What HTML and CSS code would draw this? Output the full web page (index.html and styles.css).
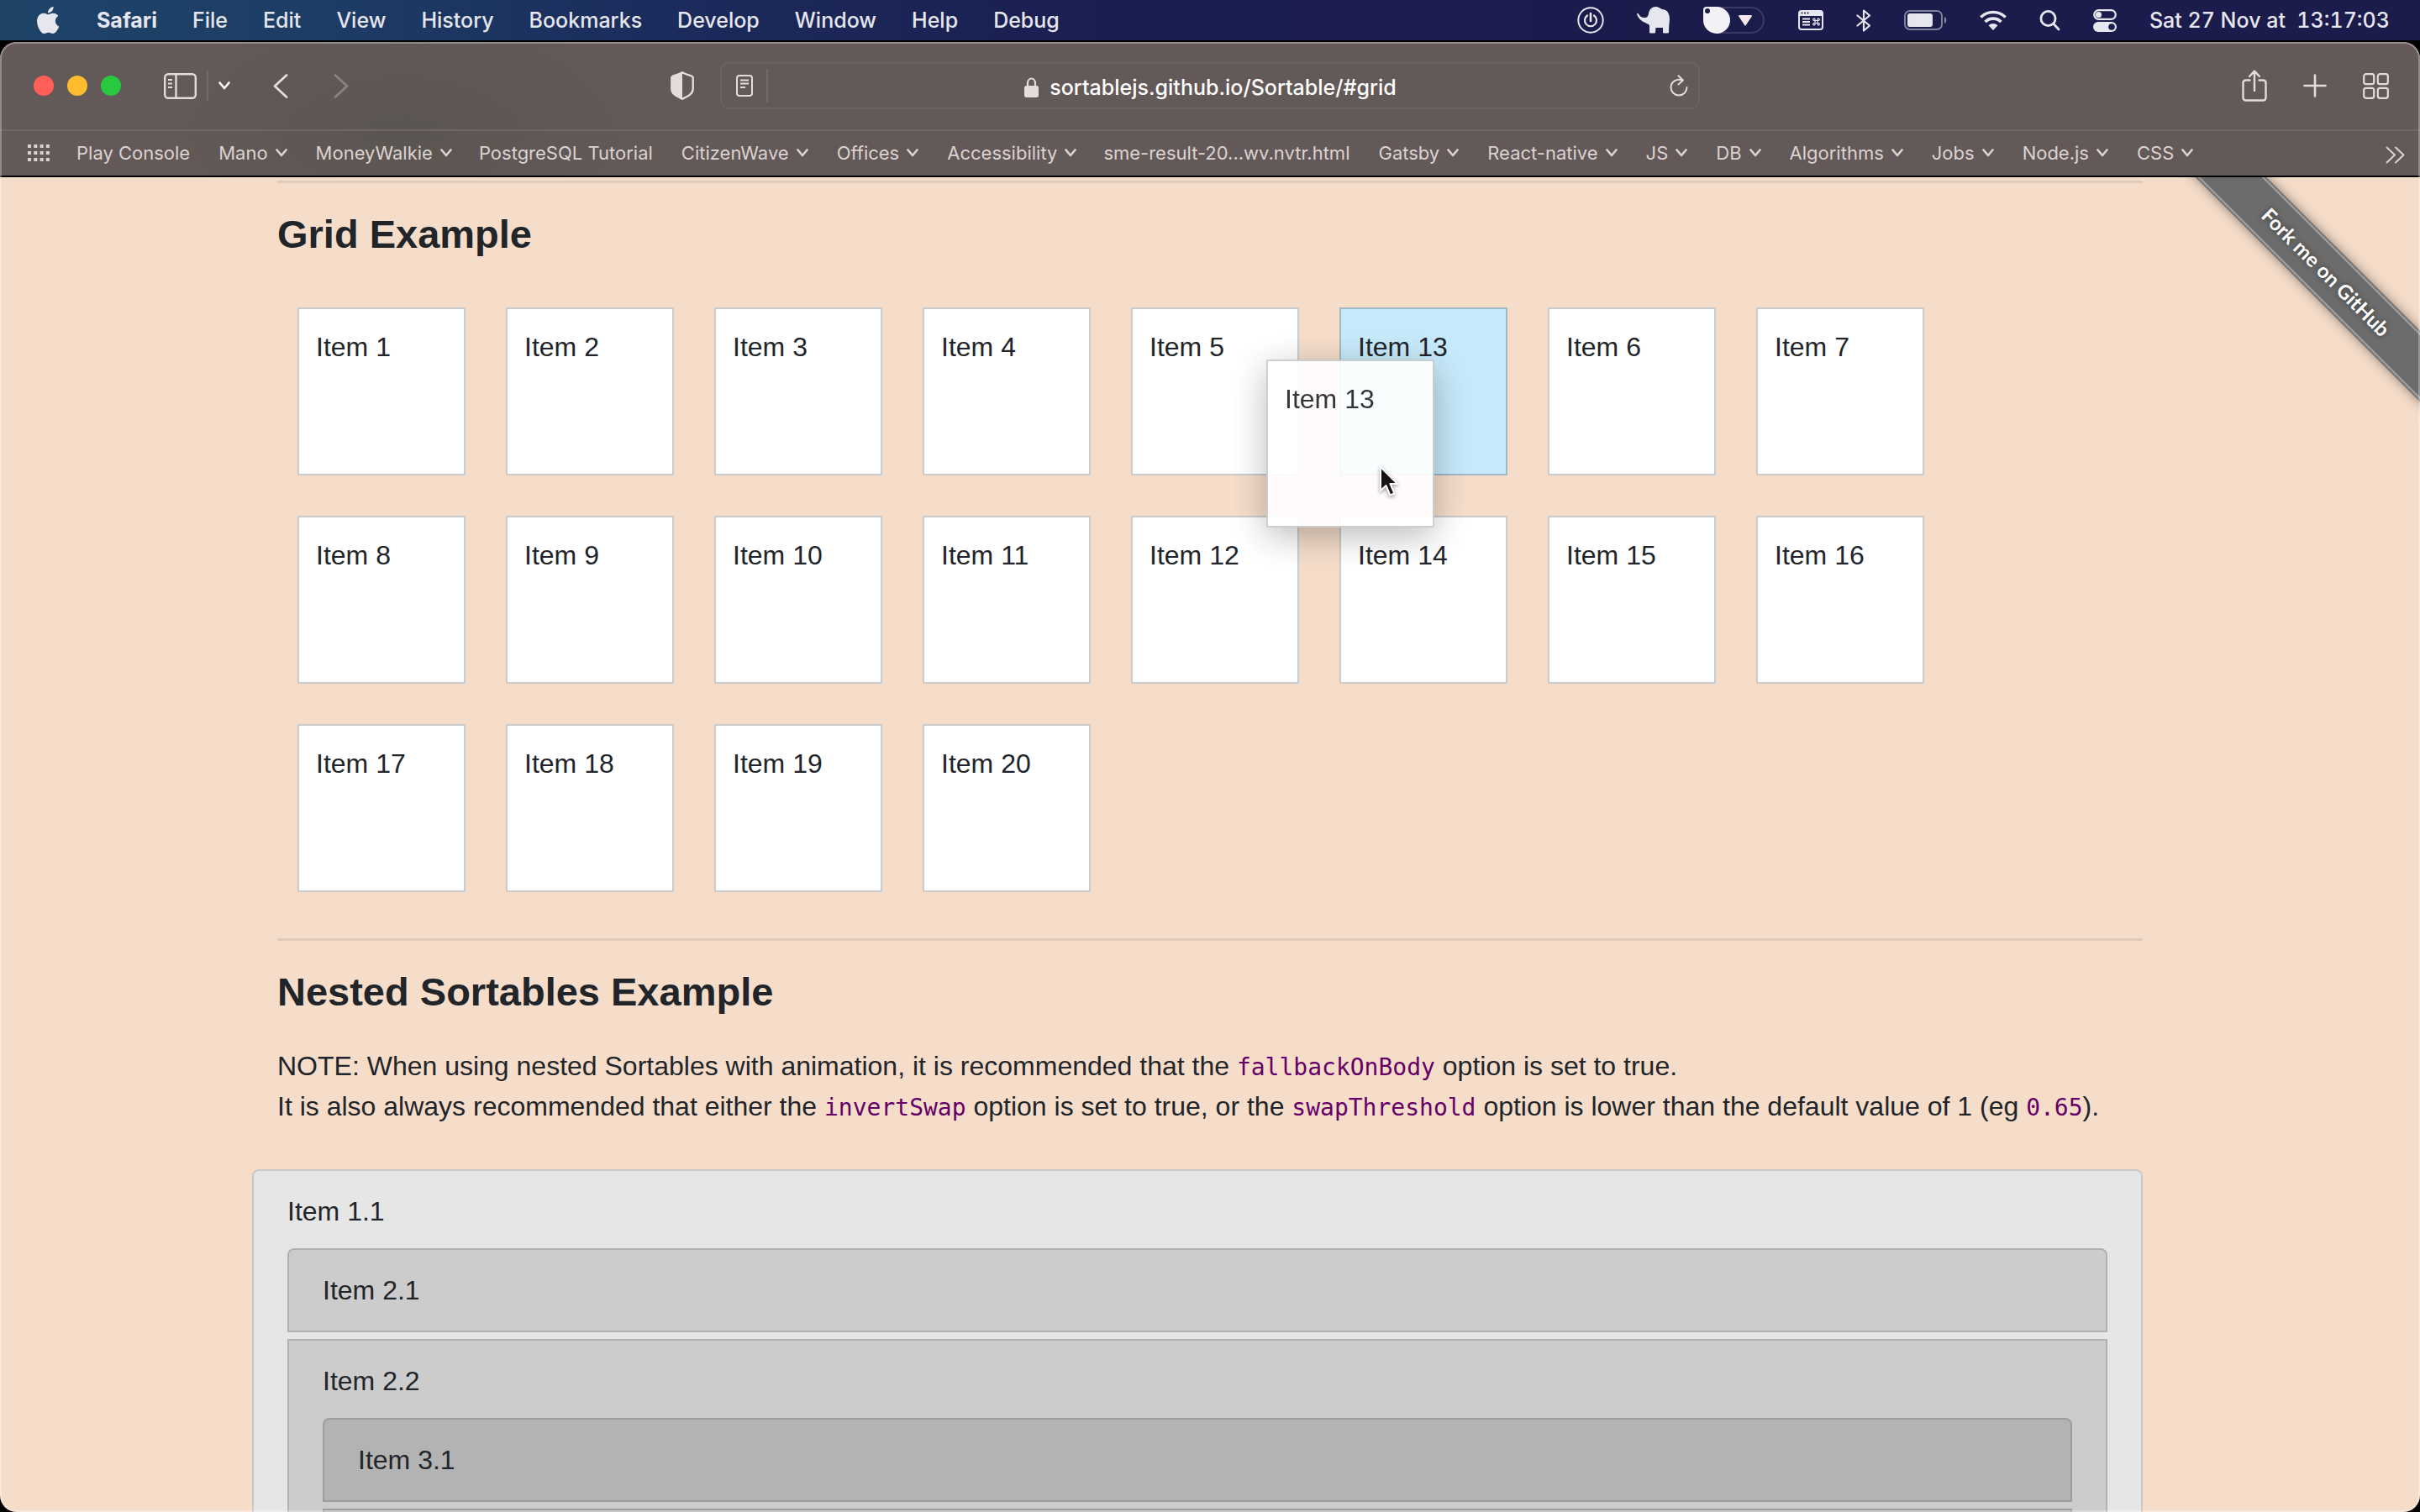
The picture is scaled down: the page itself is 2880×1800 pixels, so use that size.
FILE: index.html
```html
<!DOCTYPE html>
<html lang="en">
<head>
<meta charset="utf-8">
<title>SortableJS</title>
<link rel="stylesheet" href="styles.css">
</head>
<body>
<svg width="0" height="0" class="defs" aria-hidden="true">
  <symbol id="chev" viewBox="0 0 14 10"><path d="M1.500 1.500 7 8l5.500-6.500" fill="none" stroke="currentColor" stroke-width="2.600" stroke-linecap="round" stroke-linejoin="round"/></symbol>
</svg>

<header class="menubar">
  <nav class="menus" aria-label="Menu bar">
    <button class="menu apple" aria-label="Apple menu"><svg width="26" height="32" viewBox="2.200 0 19.400 24" preserveAspectRatio="none"><path fill="currentColor" d="M12.152 6.896c-.948 0-2.415-1.078-3.960-1.040-2.040.027-3.910 1.183-4.961 3.014-2.117 3.675-.546 9.103 1.519 12.090 1.013 1.454 2.208 3.090 3.792 3.039 1.520-.065 2.090-.987 3.935-.987 1.831 0 2.350.987 3.960.948 1.637-.026 2.676-1.480 3.676-2.948 1.156-1.688 1.636-3.325 1.662-3.415-.039-.013-3.182-1.221-3.220-4.857-.026-3.040 2.480-4.494 2.597-4.559-1.429-2.090-3.623-2.324-4.390-2.376-2-.156-3.675 1.090-4.610 1.090zM15.530 3.830c.843-1.012 1.400-2.427 1.245-3.830-1.207.052-2.662.805-3.532 1.818-.780.896-1.454 2.338-1.273 3.714 1.338.104 2.715-.688 3.559-1.701"/></svg></button>
    <button class="menu app">Safari</button>
    <button class="menu">File</button>
    <button class="menu">Edit</button>
    <button class="menu">View</button>
    <button class="menu">History</button>
    <button class="menu">Bookmarks</button>
    <button class="menu">Develop</button>
    <button class="menu">Window</button>
    <button class="menu">Help</button>
    <button class="menu">Debug</button>
  </nav>
  <div class="status">
    <svg width="32" height="32" viewBox="0 0 32 32" fill="none" stroke="currentColor" stroke-linecap="round"><circle cx="16" cy="16" r="14.700" stroke-width="2"/><path d="M16 8v9" stroke-width="2.600"/><path d="M12 10.500a7 7 0 1 0 8 0" stroke-width="2.200"/></svg>
    <svg width="40" height="32" viewBox="0 0 40 32"><path fill="currentColor" d="M0 8.500c.5-1 1.500-1 2 0 1.500 3 4 4.500 7 4.500 3.500 0 4.500-2 5-5 .8-5 4-8 8.500-8 3 0 5 1.500 6.500 2.500 1.500 1 3 .5 5 1.500 3.500 2 5 6 5 11l-.7 8-.3 7.500a1 1 0 0 1-1 1h-5a1 1 0 0 1-1-1V25h-8.500l-.5 5.500a1 1 0 0 1-1 1h-5a1 1 0 0 1-1-1V22.500C14 20.500 12.500 20.500 10 19 5 17 1 13 0 8.500z"/></svg>
    <svg width="74" height="32" viewBox="0 0 74 32"><rect x="1" y="1" width="71" height="30" rx="15" fill="none" stroke="#fff" stroke-opacity=".14" stroke-width="2"/><path fill="#f2f2f6" d="M4 0h12a16 16 0 1 1-16 16V4a4 4 0 0 1 4-4z"/><circle cx="5" cy="5" r="3" fill="#1b1b4c"/><path fill="#f6e8ea" d="M43 10h14a1 1 0 0 1 .8 1.500l-7 10.500a1 1 0 0 1-1.600 0l-7-10.500A1 1 0 0 1 43 10z"/></svg>
    <svg width="30" height="24" viewBox="0 0 30 24"><rect x="1" y="1" width="28" height="22" rx="3" fill="none" stroke="currentColor" stroke-width="2"/><path fill="currentColor" d="M1 1h28v6H1z"/><g fill="#1b1b4c"><circle cx="4.500" cy="3.500" r="1"/><circle cx="8" cy="3.500" r="1"/><circle cx="11.500" cy="3.500" r="1"/></g><path d="M5 10.500h9M5 14h9M5 17.500h9" stroke="currentColor" stroke-width="1.800"/><path d="M20 12.500h3v3h-3zM20 12.500h-1.500a1.200 1.200 0 1 1 1.500-1.500zM23 12.500h1.500A1.200 1.200 0 1 0 23 11zM20 15.500h-1.500A1.200 1.200 0 1 0 20 17zM23 15.500h1.500A1.200 1.200 0 1 1 23 17z" fill="none" stroke="currentColor" stroke-width="1.200"/></svg>
    <svg width="18" height="27" viewBox="0 0 18 27"><path d="M1.500 7.500 16 19.500l-7 6V1.500l7 6L1.500 19.500" fill="none" stroke="currentColor" stroke-width="2.200" stroke-linejoin="round" stroke-linecap="round"/></svg>
    <svg width="51" height="24" viewBox="0 0 51 24"><rect x="1" y="1" width="44" height="22" rx="6" fill="none" stroke="currentColor" stroke-opacity=".5" stroke-width="2"/><rect x="4" y="4" width="30" height="16" rx="3" fill="currentColor"/><path d="M48 8c3 1 3 7 0 8z" fill="currentColor" fill-opacity=".55"/></svg>
    <svg width="32" height="24" viewBox="0 0 32 24" fill="none" stroke="currentColor" stroke-width="3.600"><path d="M1.300 8.500a21 21 0 0 1 29.400 0"/><path d="M6.500 14a13.500 13.500 0 0 1 19 0"/><path fill="currentColor" stroke="none" d="M16 24l-5.500-5.700a8 8 0 0 1 11 0z"/></svg>
    <svg width="25" height="25" viewBox="0 0 25 25" fill="none" stroke="currentColor" stroke-width="2.800" stroke-linecap="round"><circle cx="10.500" cy="10" r="8.600"/><path d="M17 16.500l6 6.500"/></svg>
    <svg width="28" height="27" viewBox="0 0 28 27"><rect x="1.200" y="1.200" width="25.600" height="10.600" rx="5.300" fill="none" stroke="currentColor" stroke-width="2.200"/><circle cx="6.500" cy="6.500" r="3.600" fill="currentColor"/><rect y="15" width="28" height="12" rx="6" fill="currentColor"/><circle cx="22" cy="21" r="3.800" fill="#1b1b4c"/></svg>
    <time class="clock">Sat 27 Nov at&nbsp; 13:17:03</time>
  </div>
</header>

<div class="window">
  <div class="toolbar">
    <div class="tools">
      <div class="lights">
        <button class="light close" aria-label="Close"></button>
        <button class="light mini" aria-label="Minimise"></button>
        <button class="light full" aria-label="Full screen"></button>
      </div>
      <div class="sidebar-tools">
        <button aria-label="Show sidebar"><svg width="39" height="31" viewBox="0 0 39 31" fill="none" stroke="currentColor"><rect x="1.200" y="1.200" width="36.600" height="28.600" rx="4" stroke-width="2.400"/><path d="M14.500 1v29" stroke-width="2.400"/><path d="M5 8h5M5 12.500h5M5 17h5" stroke-width="1.800"/></svg></button>
        <span class="tool-line"></span>
        <button class="bright" aria-label="Tab groups"><svg width="14" height="10"><use href="#chev"/></svg></button>
      </div>
      <div class="history">
        <button aria-label="Back"><svg width="18" height="29" viewBox="0 0 18 29"><path d="M16 1.500 2 14.500 16 27.500" fill="none" stroke="currentColor" stroke-width="2.800" stroke-linecap="round" stroke-linejoin="round"/></svg></button>
        <button class="dim" aria-label="Forward"><svg width="18" height="29" viewBox="0 0 18 29"><path d="M2 1.500 16 14.500 2 27.500" fill="none" stroke="currentColor" stroke-width="2.800" stroke-linecap="round" stroke-linejoin="round"/></svg></button>
      </div>
      <button class="shield" aria-label="Privacy report"><svg width="28" height="34" viewBox="0 0 28 34"><path d="M14 1.300C10 3.500 6 4.500 3 5.500c-1 .4-1.700 1-1.700 2V21c0 6 7 9 12.700 11.700C19.700 30 26.700 27 26.700 21V7.500c0-1-.7-1.600-1.700-2-3-1-7-2-11-4.200z" fill="none" stroke="currentColor" stroke-width="2.400"/><path d="M14 1C10 3.500 6 4.500 3 5.500c-1 .4-2 1-2 2V21c0 6 7 9 13 12z" fill="currentColor"/></svg></button>
    </div>

    <div class="address">
      <button class="reader" aria-label="Show reader"><svg width="20" height="26" viewBox="0 0 20 26" fill="none" stroke="currentColor"><rect x="1" y="1" width="18" height="24" rx="3" stroke-width="2"/><path d="M5 6.500h10M5 10.500h10M5 15h6" stroke-width="1.800"/></svg></button>
      <span class="tool-line tall"></span>
      <label class="url">
        <svg width="17" height="24" viewBox="0 0 17 24"><path d="M4 11V7a4.500 5.500 0 0 1 9 0v4" fill="none" stroke="currentColor" stroke-width="2.200"/><rect y="10" width="17" height="14" rx="2.500" fill="currentColor"/></svg>
        <input type="text" value="sortablejs.github.io/Sortable/#grid" aria-label="Address">
      </label>
      <button class="reload" aria-label="Reload"><svg width="22" height="26" viewBox="0 0 22 26" fill="none" stroke="currentColor" stroke-width="2" stroke-linecap="round" stroke-linejoin="round"><path d="M15.500 6.500C8 4 1.500 8.500 1.500 15a9.500 9.500 0 0 0 19 0"/><path d="M10.500 1.200 15.800 6.500 10.500 11.500"/></svg></button>
    </div>

    <div class="tools end">
      <button aria-label="Share"><svg width="30" height="38" viewBox="0 0 30 38" fill="none" stroke="currentColor" stroke-width="2.400" stroke-linecap="round" stroke-linejoin="round"><path d="M9.500 12.500H4.500a3 3 0 0 0-3 3v18a3 3 0 0 0 3 3h21a3 3 0 0 0 3-3v-18a3 3 0 0 0-3-3h-5"/><path d="M15 25V2M9 8l6-6.300L21 8"/></svg></button>
      <button aria-label="New tab"><svg width="28" height="28" viewBox="0 0 28 28"><path d="M14 1.500v25M1.500 14h25" stroke="currentColor" stroke-width="2.600" stroke-linecap="round"/></svg></button>
      <button aria-label="Tab overview"><svg width="31" height="31" viewBox="0 0 31 31" fill="none" stroke="currentColor" stroke-width="2.200"><rect x="1.200" y="1.200" width="12" height="12" rx="2.500"/><rect x="17.800" y="1.200" width="12" height="12" rx="2.500"/><rect x="1.200" y="17.800" width="12" height="12" rx="2.500"/><rect x="17.800" y="17.800" width="12" height="12" rx="2.500"/></svg></button>
    </div>
  </div>

  <nav class="bookmarks" aria-label="Favourites">
    <button aria-label="All bookmarks"><svg width="26" height="20" viewBox="0 0 26 20"><path d="M2 0v20M9.300 0v20M16.600 0v20M23.900 0v20" stroke="currentColor" stroke-width="4" stroke-dasharray="4 4"/></svg></button>
    <a href="#">Play Console</a>
    <button>Mano<svg width="14" height="10"><use href="#chev"/></svg></button>
    <button>MoneyWalkie<svg width="14" height="10"><use href="#chev"/></svg></button>
    <a href="#">PostgreSQL Tutorial</a>
    <button>CitizenWave<svg width="14" height="10"><use href="#chev"/></svg></button>
    <button>Offices<svg width="14" height="10"><use href="#chev"/></svg></button>
    <button>Accessibility<svg width="14" height="10"><use href="#chev"/></svg></button>
    <a href="#">sme-result-20...wv.nvtr.html</a>
    <button>Gatsby<svg width="14" height="10"><use href="#chev"/></svg></button>
    <button>React-native<svg width="14" height="10"><use href="#chev"/></svg></button>
    <button>JS<svg width="14" height="10"><use href="#chev"/></svg></button>
    <button>DB<svg width="14" height="10"><use href="#chev"/></svg></button>
    <button>Algorithms<svg width="14" height="10"><use href="#chev"/></svg></button>
    <button>Jobs<svg width="14" height="10"><use href="#chev"/></svg></button>
    <button>Node.js<svg width="14" height="10"><use href="#chev"/></svg></button>
    <button>CSS<svg width="14" height="10"><use href="#chev"/></svg></button>
    <button class="more" aria-label="More bookmarks"><svg width="23" height="21" viewBox="0 0 23 21"><path d="M1.500 1.500 11 10.500 1.500 19.500M12 1.500 21.500 10.500 12 19.500" fill="none" stroke="currentColor" stroke-width="2" stroke-linecap="round" stroke-linejoin="round"/></svg></button>
  </nav>

  <main class="page">
    <a class="ribbon" href="#">Fork me on GitHub</a>
    <div class="container">
      <hr>
      <section>
        <h4>Grid Example</h4>
        <ul class="tiles">
          <li class="tile">Item 1</li>
          <li class="tile">Item 2</li>
          <li class="tile">Item 3</li>
          <li class="tile">Item 4</li>
          <li class="tile">Item 5</li>
          <li class="tile ghost">Item 13
            <div class="tile dragged">Item 13
              <svg class="cursor" width="26" height="40" viewBox="0 0 26 40"><path d="M2 2v28l6.500-6 4.800 11.500 5-2.200L13.500 22H22z" fill="#000" stroke="#fff" stroke-width="2" stroke-linejoin="round"/></svg>
            </div>
          </li>
          <li class="tile">Item 6</li>
          <li class="tile">Item 7</li>
          <li class="tile">Item 8</li>
          <li class="tile">Item 9</li>
          <li class="tile">Item 10</li>
          <li class="tile">Item 11</li>
          <li class="tile">Item 12</li>
          <li class="tile">Item 14</li>
          <li class="tile">Item 15</li>
          <li class="tile">Item 16</li>
          <li class="tile">Item 17</li>
          <li class="tile">Item 18</li>
          <li class="tile">Item 19</li>
          <li class="tile">Item 20</li>
        </ul>
      </section>
      <hr>
      <section>
        <h4>Nested Sortables Example</h4>
        <p>NOTE: When using nested Sortables with animation, it is recommended that the <code>fallbackOnBody</code> option is set to true.<br>It is also always recommended that either the <code>invertSwap</code> option is set to true, or the <code>swapThreshold</code> option is lower than the default value of 1 (eg <code>0.65</code>).</p>
        <div class="nested">
          <div class="node level-1">Item 1.1
            <div class="group">
              <div class="node level-2">Item 2.1</div>
              <div class="node level-2">Item 2.2
                <div class="group">
                  <div class="node level-3">Item 3.1</div>
                  <div class="node level-3"></div>
                </div>
              </div>
            </div>
          </div>
        </div>
      </section>
    </div>
  </main>
</div>
</body>
</html>
```
FILE: styles.css
```css
* { box-sizing: border-box; }

body {
  margin: 0;
  height: 100vh;
  overflow: hidden;
  display: flex;
  flex-direction: column;
  background: #000;
  font-family: Inter, "Liberation Sans", sans-serif;
}

.defs { position: absolute; }
svg { display: block; flex: none; }

button {
  display: flex;
  align-items: center;
  padding: 0;
  border: 0;
  background: none;
  color: inherit;
  font: inherit;
}

/* Menu bar */
.menubar {
  display: flex;
  justify-content: space-between;
  align-items: center;
  height: 48px;
  padding: 0 36px 0 44px;
  background: linear-gradient(90deg, #1e4468 0, #1d3c65 400px, #1b2b5b 800px, #1a1f50 1300px, #1b1b4c 2000px);
  color: #e6e6ee;
  font-size: 25px;
  font-weight: 500;
  white-space: nowrap;
}
.menus { display: flex; align-items: center; gap: 42px; }
.menu { line-height: 48px; }
.menu.apple { padding-right: 3px; }
.menu.app { font-weight: 700; }
.status { display: flex; align-items: center; gap: 39px; }
.clock { line-height: 48px; font-variant-numeric: tabular-nums; }

/* Browser window */
.window {
  position: relative;
  flex: 1;
  min-height: 0;
  margin-top: 2px;
  display: flex;
  flex-direction: column;
  border-radius: 20px;
  overflow: hidden;
  background: #f5ddca;
}
.window::after {
  content: "";
  position: absolute;
  inset: 0;
  border: 2px solid rgba(255, 255, 255, .3);
  border-radius: 20px;
  pointer-events: none;
}

.toolbar, .bookmarks { background: #635958; color: #e3dcdb; }
.toolbar {
  display: grid;
  grid-template-columns: minmax(0, 1fr) minmax(0, 1166px) minmax(0, 1fr);
  align-items: center;
  height: 104px;
  background: radial-gradient(ellipse 300px 180px at 480px 130px, #5a5551, #635958);
}
.tools { display: flex; align-items: center; padding-left: 40px; }
.lights { display: flex; gap: 16px; }
.light { width: 24px; height: 24px; border-radius: 50%; }
.light.close { background: #ff5f57; }
.light.mini { background: #febc2e; }
.light.full { background: #28c840; }
.sidebar-tools { display: flex; align-items: center; gap: 12px; margin-left: 51px; }
.tool-line { width: 2px; height: 36px; background: #736a68; }
.tool-line.tall { height: 40px; }
.bright { color: #fff; }
.history { display: flex; gap: 54px; margin-left: 51px; }
.dim { color: #8a8280; }
.shield { margin: 0 31px 0 auto; }

.address {
  display: flex;
  align-items: center;
  height: 56px;
  padding: 0 12px 0 17px;
  border: 2px solid #6b6260;
  border-radius: 10px;
}
.address .tool-line { margin-left: 16px; }
.url {
  flex: 1;
  display: flex;
  justify-content: center;
  align-items: center;
  gap: 13px;
  padding: 3px 20px 0 0;
}
.url input {
  field-sizing: content;
  padding: 0;
  border: 0;
  background: none;
  color: #fff;
  font: 500 25px/36px Inter, "Liberation Sans", sans-serif;
}
.reload { margin-left: auto; }
.tools.end { justify-content: flex-end; gap: 43px; padding-right: 37px; }

.bookmarks {
  display: flex;
  align-items: center;
  gap: 34px;
  height: 57px;
  padding: 0 18px 2px 33px;
  border-top: 2px solid #6f6664;
  border-bottom: 2px solid #000;
  background: radial-gradient(ellipse 300px 180px at 480px -20px, #5a5551, #635958);
  color: #dcd2d0;
  font-size: 22px;
  line-height: 30px;
  white-space: nowrap;
}
.bookmarks button { gap: 9px; }
.bookmarks a { color: inherit; text-decoration: none; }
.bookmarks button + a { margin-left: -2px; }
.bookmarks .more { margin-left: auto; padding-top: 5px; }

/* Page */
.page {
  position: relative;
  flex: 1;
  min-height: 0;
  overflow: hidden;
  color: #212529;
  font: 32px/48px "Liberation Sans", Arial, sans-serif;
}
.container { max-width: 2280px; margin: 0 auto; padding: 0 30px; }
hr { height: 3px; margin: 0; border: 0; background: rgba(0, 0, 0, .08); }
.container > hr:first-child { margin-top: 4px; }
h4 { margin: 0; padding: 33px 0 19px; font-size: 47px; line-height: 56px; font-weight: 700; }

.tiles {
  display: flex;
  flex-wrap: wrap;
  margin: 0;
  padding: 16px 0 31px;
  list-style: none;
}
.tile {
  position: static;
  width: 200px;
  height: 200px;
  margin: 24px;
  padding: 21px 20px;
  border: 2px solid #c9cbcc;
  background: #fff;
}
.tile.ghost { position: relative; z-index: 1; background: #c7eafa; border-color: #9fb9c6; }
.tile.dragged {
  position: absolute;
  left: -89px;
  top: 60px;
  margin: 0;
  opacity: .91;
  box-shadow: 0 10px 40px rgba(0, 0, 0, .3);
}
.cursor {
  position: absolute;
  left: 132px;
  top: 124px;
  filter: drop-shadow(0 2px 2px rgba(0, 0, 0, .4));
}

p { margin: 0; padding: 17px 0 51px; }
code { font: 28px/40px "DejaVu Sans Mono", "Liberation Mono", monospace; color: #660066; }

.nested { margin-left: -30px; }
.node { padding: 24px 40px; border: 2px solid rgba(0, 0, 0, .125); }
.node:first-child { border-radius: 8px 8px 0 0; }
.node + .node { margin-top: 8px; }
.group { margin-top: 20px; }
.level-1 { background-color: #e6e6e6; border-color: #c8c8c9; }
.level-2 { background-color: #ccc; border-color: #b1b1b1; }
.level-3 { background-color: #b3b3b3; border-color: #9d9d9d; }

.ribbon {
  position: absolute;
  top: 83px;
  right: -88px;
  width: 400px;
  height: 60px;
  transform: rotate(45deg);
  display: flex;
  justify-content: center;
  align-items: center;
  background: linear-gradient(#767676 2px, #9c9c9c 2px, #9c9c9c 4px, #6c6c6c 4px, #6c6c6c 56px, #9c9c9c 56px, #9c9c9c 58px, #767676 58px);
  box-shadow: 0 0 14px rgba(0, 0, 0, .4);
  color: #fff;
  font: 700 24px/32px Lato, "Open Sans", sans-serif;
  text-decoration: none;
  text-shadow: 0 0 6px rgba(0, 0, 0, .5);
}
```
